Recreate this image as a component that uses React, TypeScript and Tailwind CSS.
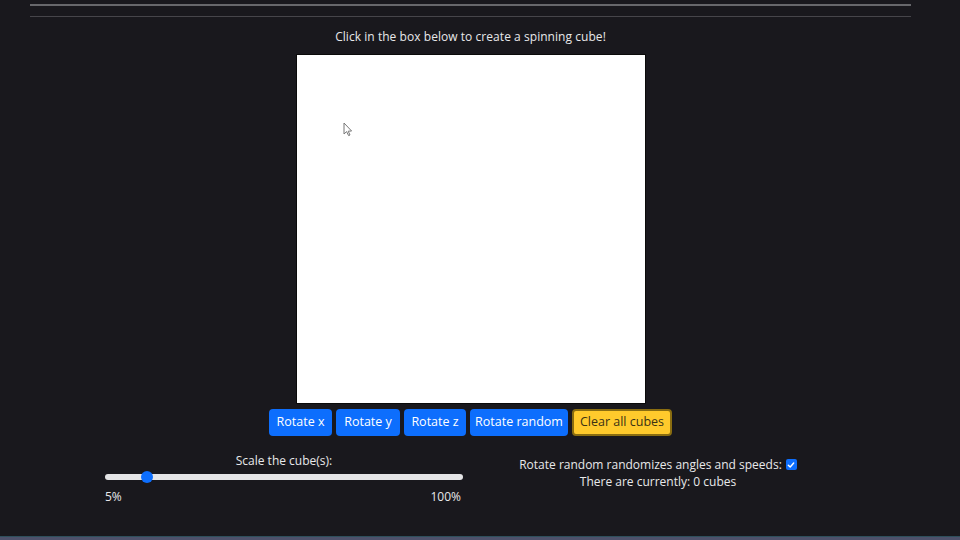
import React from 'react'

const BTN = 'h-[27px] whitespace-nowrap rounded-[4px] px-0 text-[12.5px] leading-none text-white bg-[#0d6efd]'

function Cursor() {
  return (
    <svg width="10" height="15" viewBox="0 0 10 15" className="absolute left-[46px] top-[67px]">
      <path d="M1 1 L1 12 L3.6 9.6 L5.6 13.6 L7 13 L5.2 9.2 L8.6 9 Z" fill="#fff" stroke="#777" strokeWidth="1" strokeLinejoin="round" />
    </svg>
  )
}

export default function App() {
  return (
    <div className="flex h-[540px] w-[960px] flex-col overflow-hidden bg-[#19181d] text-[#e8e8ea]" style={{ fontFamily: '"Open Sans", sans-serif' }}>
      <div className="ml-[30px] flex w-[881px] flex-col">
        <div className="mt-[4px] h-[2px] bg-[#67676b]" />
        <div className="mt-[10px] h-px bg-[#46454a]" />

        <p className="mt-[12px] text-center text-[12px] font-medium leading-[16px] tracking-[0.05px]">
          Click in the box below to create a spinning cube!
        </p>

        <div className="relative mx-auto mt-[9px] h-[350px] w-[350px] border border-[#0a0a0a] bg-white">
          <Cursor />
        </div>

        <div className="mx-auto mt-[5px] flex gap-[4px]">
          <button className={BTN + ' w-[63px]'}>Rotate x</button>
          <button className={BTN + ' w-[64px]'}>Rotate y</button>
          <button className={BTN + ' w-[62px]'}>Rotate z</button>
          <button className={BTN + ' w-[98px]'}>Rotate random</button>
          <button className="h-[27px] w-[100px] whitespace-nowrap rounded-[4px] border-2 border-[#8a6d10] bg-[#ffca2c] px-0 text-[12.5px] leading-none text-[#3b3214]">
            Clear all cubes
          </button>
        </div>

        <div className="mt-[17px] flex">
          <div className="ml-[75px] w-[358px] text-[12px] font-medium">
            <p className="text-center leading-[16px]">Scale the cube(s):</p>
            <div className="relative mt-[2px] h-[12px]">
              <div className="absolute left-0 right-0 top-[3px] h-[6px] rounded-full bg-[#e4e4e6]" />
              <div className="absolute left-[36px] top-0 h-[12px] w-[12px] rounded-full bg-[#0d6efd]" />
            </div>
            <div className="mt-[6px] flex justify-between leading-[16px]">
              <span>5%</span>
              <span className="pr-[2px]">100%</span>
            </div>
          </div>
          <div className="w-[390px] pt-[3px] text-center text-[12px] font-medium leading-[17px]">
            <p className="flex items-center justify-center gap-[4px]">
              Rotate random randomizes angles and speeds:
              <span className="flex h-[11px] w-[11px] items-center justify-center rounded-[2px] bg-[#0d6efd]">
                <svg width="8" height="8" viewBox="0 0 8 8">
                  <path d="M1.3 4.2 L3.2 6 L6.7 2" fill="none" stroke="#fff" strokeWidth="1.4" strokeLinecap="round" strokeLinejoin="round" />
                </svg>
              </span>
            </p>
            <p>There are currently: 0 cubes</p>
          </div>
        </div>
      </div>

      <div className="mt-auto h-px bg-[#2e4f5c]" />
      <div className="h-[3px] bg-[#4d516b]" />
    </div>
  )
}
